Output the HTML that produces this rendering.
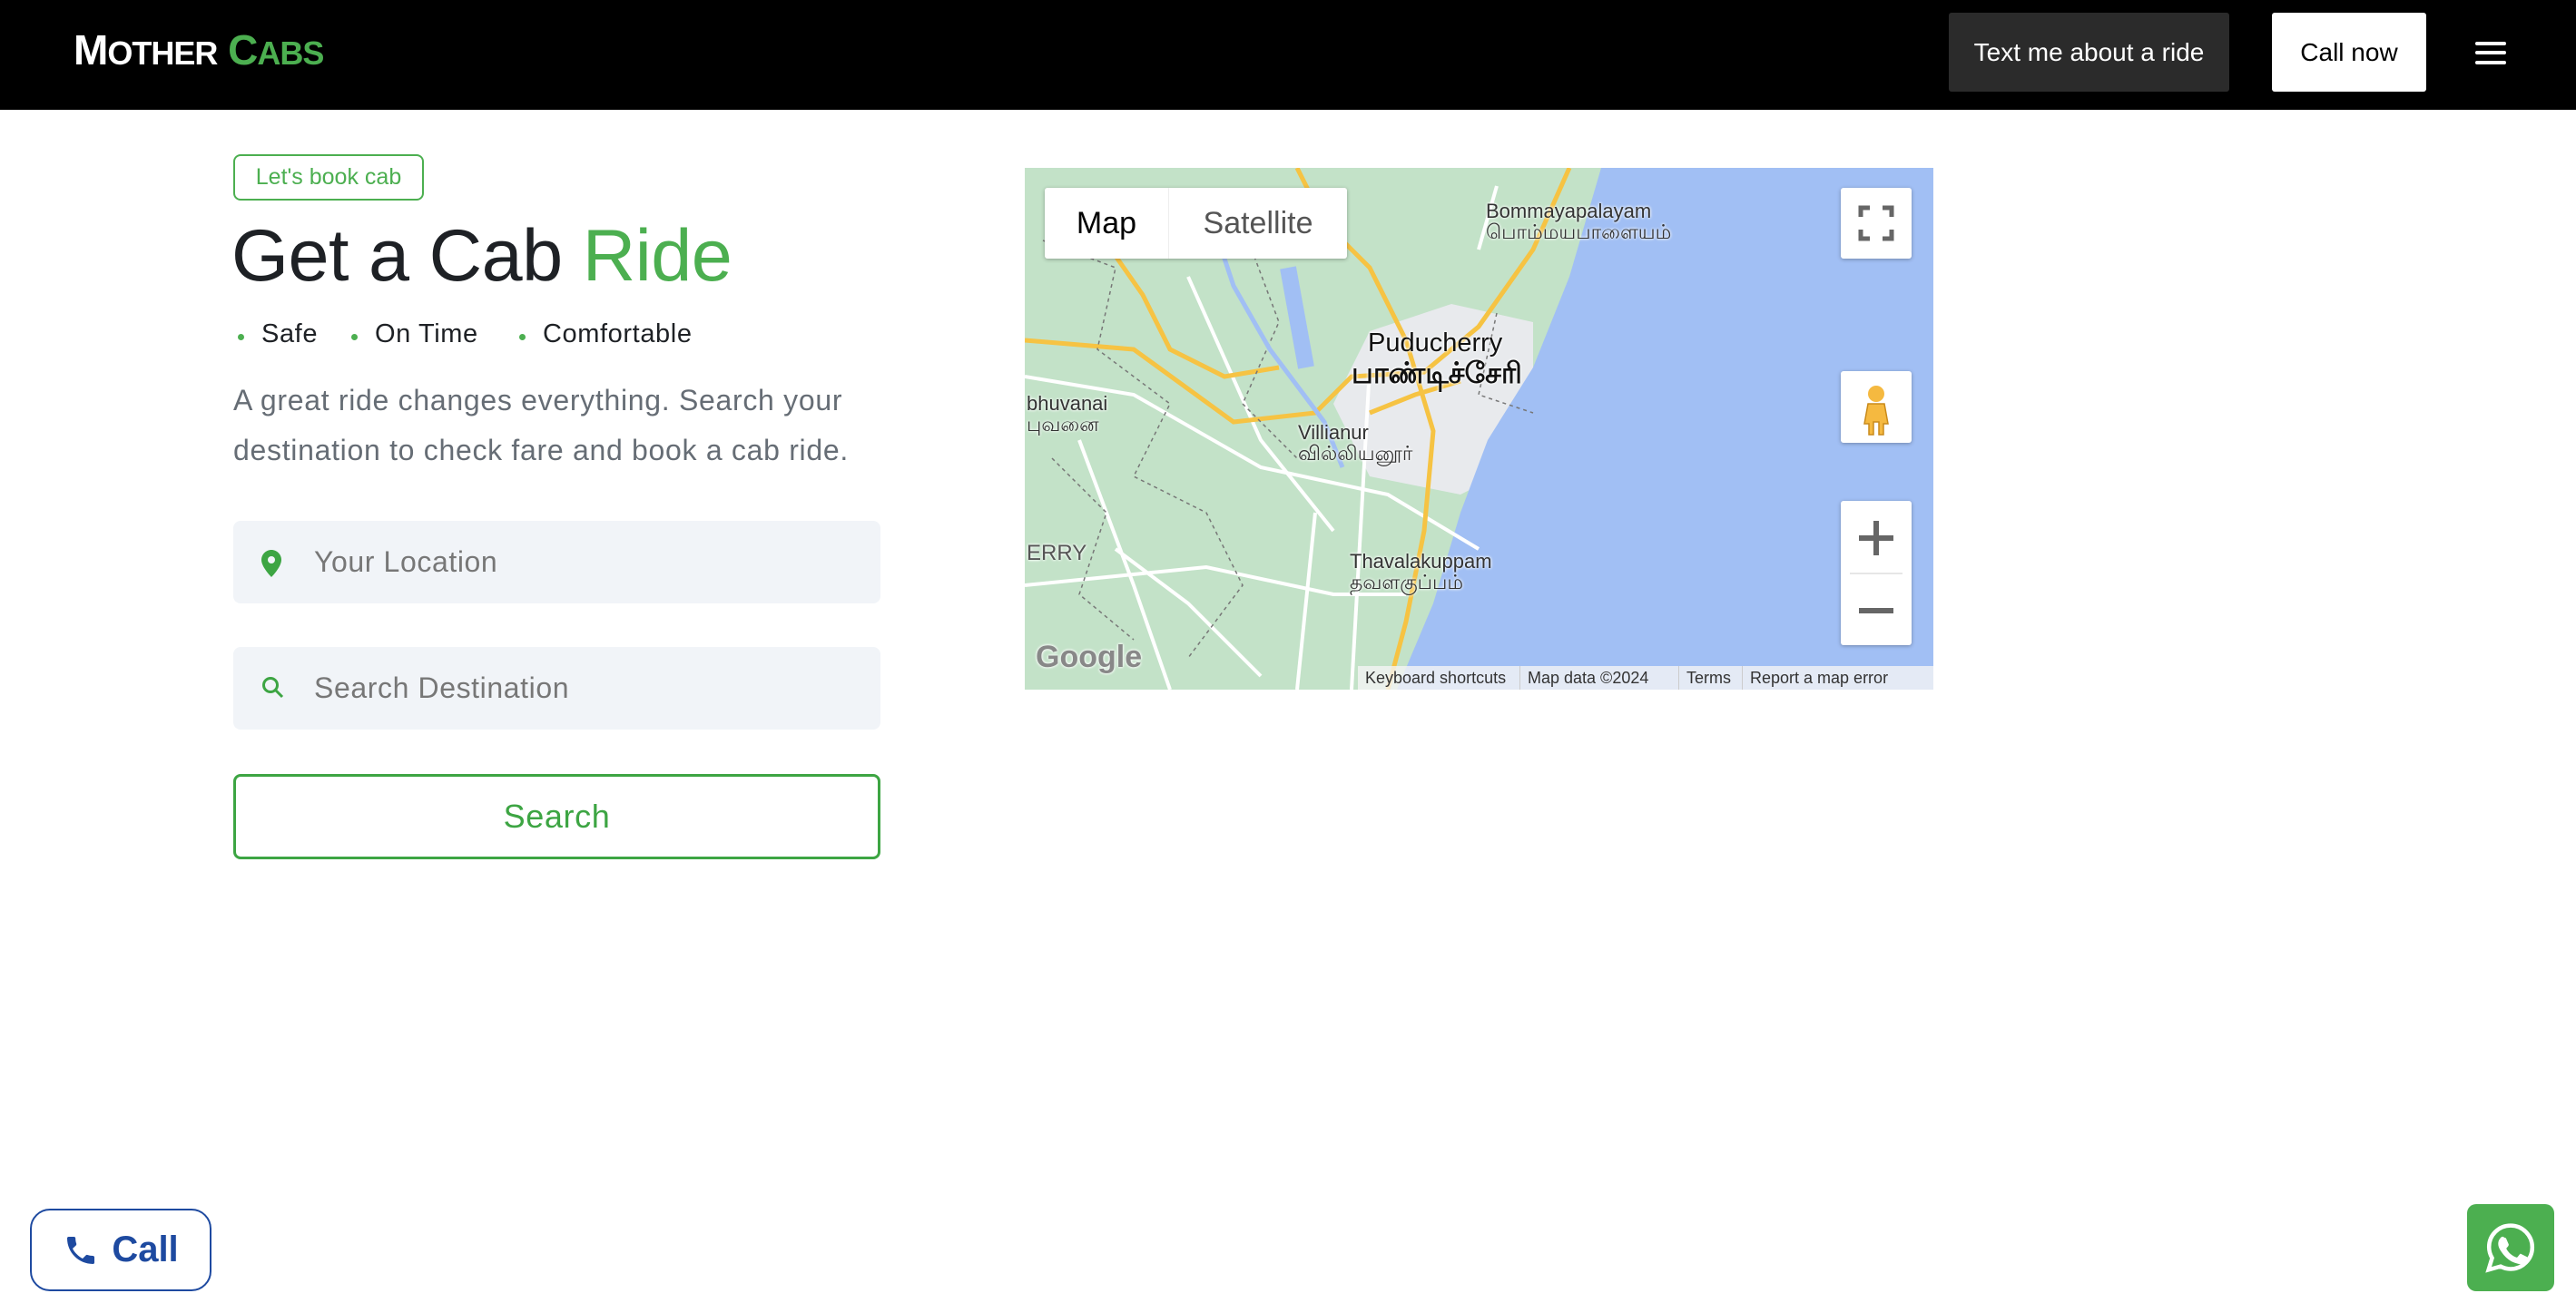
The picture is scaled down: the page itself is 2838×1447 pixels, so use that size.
<!DOCTYPE html>
<html><head><meta charset="utf-8"><style>
*{margin:0;padding:0;box-sizing:border-box}
body{width:2838px;height:1447px;background:#fff;font-family:"Liberation Sans",sans-serif;position:relative;overflow:hidden}
.hdr{position:absolute;left:0;top:0;width:2838px;height:121px;background:#000}
.logo{position:absolute;left:81px;top:28px;font-size:46px;font-weight:bold;color:#fff;letter-spacing:-1px}
.logo small{font-size:36px}
.logo .g{color:#4caf50}
.btn1{position:absolute;left:2147px;top:14px;width:309px;height:87px;background:#2b2b2b;color:#fff;font-size:28px;display:flex;align-items:center;justify-content:center;border-radius:3px}
.btn2{position:absolute;left:2503px;top:14px;width:170px;height:87px;background:#fff;color:#000;font-size:28px;display:flex;align-items:center;justify-content:center;border-radius:3px}
.ham{position:absolute;left:2727px;width:34px;height:4px;background:#fff;border-radius:2px}
.badge{position:absolute;left:257px;top:170px;width:210px;height:51px;border:2px solid #4caf50;border-radius:8px;color:#4caf50;font-size:25px;display:flex;align-items:center;justify-content:center}
h1{position:absolute;left:255px;top:236px;font-size:81px;color:#1e2125;letter-spacing:-0.5px;font-weight:normal}
h1 span{color:#4caf50}
.bul{position:absolute;top:352px;font-size:29px;color:#1e2125;letter-spacing:0.6px}
.bul:before{content:"";position:absolute;left:-26px;top:16px;width:7px;height:7px;border-radius:50%;background:#4caf50}
.p{position:absolute;left:257px;top:414px;width:800px;font-size:32px;letter-spacing:0.7px;line-height:55px;color:#666d75}
.inp{position:absolute;left:257px;width:713px;height:91px;background:#f1f4f8;border-radius:8px;font-size:32px;letter-spacing:0.6px;color:#777;display:flex;align-items:center;padding-left:89px}
.inp svg{position:absolute;left:31px;top:32px}
.sbtn{position:absolute;left:257px;top:853px;width:713px;height:94px;border:3px solid #3da543;border-radius:8px;color:#3da543;font-size:36px;letter-spacing:0.6px;display:flex;align-items:center;justify-content:center}
.map{position:absolute;left:1129px;top:185px;width:1001px;height:575px;background:#c3e2c8;overflow:hidden}
.ctl{position:absolute;background:#fff;box-shadow:0 1px 4px rgba(0,0,0,.3);border-radius:3px}
.lbl{position:absolute;font-size:24px;color:#333;text-shadow:0 0 3px #fff,0 0 3px #fff;font-family:"Liberation Sans","Noto Sans CJK SC",sans-serif;line-height:1.05}
.foot{position:absolute;top:549px;height:26px;background:rgba(245,245,245,.8);font-size:18px;color:#333;line-height:26px;padding:0 8px;white-space:nowrap}
.call{position:absolute;left:33px;top:1332px;width:200px;height:91px;border:2px solid #1e4aa0;border-radius:22px;color:#1e4aa0;font-size:40px;font-weight:bold;display:flex;align-items:center;justify-content:center;gap:14px}
.wa{position:absolute;left:2718px;top:1327px;width:96px;height:96px;background:#4caf50;border-radius:10px;display:flex;align-items:center;justify-content:center}
</style></head><body>
<div class="hdr">
 <div class="logo">M<small>OTHER</small> <span class="g">C<small>ABS</small></span></div>
 <div class="btn1">Text me about a ride</div>
 <div class="btn2">Call now</div>
 <div class="ham" style="top:46px"></div><div class="ham" style="top:56px"></div><div class="ham" style="top:67px"></div>
</div>
<div class="badge">Let's book cab</div>
<h1>Get a Cab <span>Ride</span></h1>
<div class="bul" style="left:288px">Safe</div>
<div class="bul" style="left:413px">On Time</div>
<div class="bul" style="left:598px">Comfortable</div>
<div class="p">A great ride changes everything. Search your<br>destination to check fare and book a cab ride.</div>
<div class="inp" style="top:574px"><svg width="22" height="30" viewBox="0 0 22 30"><path d="M11 0C5 0 0 5 0 11c0 8 11 19 11 19s11-11 11-19C22 5 17 0 11 0z" fill="#3da543"/><circle cx="11" cy="11" r="4" fill="#f1f4f8"/></svg>Your Location</div>
<div class="inp" style="top:713px"><svg width="26" height="26" viewBox="0 0 26 26"><circle cx="10" cy="10" r="7.5" fill="none" stroke="#3da543" stroke-width="3"/><path d="M16 16l7 7" stroke="#3da543" stroke-width="3"/></svg>Search Destination</div>
<div class="sbtn">Search</div>

<div class="map">
 <svg width="1001" height="575" style="position:absolute;left:0;top:0">
  <path d="M380 180 L470 150 L560 170 L560 320 L480 360 L380 340 L340 260Z" fill="#e8eaed"/>
  <path d="M635 0 L1001 0 L1001 575 L410 575 L450 480 L480 380 L510 300 L560 220 L600 120Z" fill="#a1bff4"/>
  <g stroke="#fff" stroke-width="4" fill="none">
   <path d="M0 230 L120 250 L260 330 L400 360 L500 420"/>
   <path d="M60 300 L120 460 L160 575"/>
   <path d="M0 460 L200 440 L340 470 L420 470"/>
   <path d="M320 380 L300 575"/>
   <path d="M180 120 L260 300 L340 400"/>
   <path d="M380 220 L360 575"/>
   <path d="M500 90 L520 20"/>
   <path d="M100 420 L180 480 L260 560"/>
  </g>
  <g stroke="#f6c343" stroke-width="5" fill="none">
   <path d="M300 0 L330 60 L380 110 L420 190 L450 290 L440 400 L420 500 L400 575"/>
   <path d="M0 190 L120 200 L230 280 L320 270 L360 230 L440 225 L500 175 L560 90 L600 0"/>
   <path d="M60 40 L130 140 L160 200 L220 230 L280 220"/>
   <path d="M480 235 L430 250 L380 270"/>
  </g>
  <g stroke="#777" stroke-width="1.5" stroke-dasharray="4 4" fill="none">
   <path d="M20 80 L100 110 L80 200 L160 260 L120 340 L200 380 L240 460 L180 540"/>
   <path d="M250 90 L280 170 L240 260 L300 320"/>
   <path d="M520 160 L500 250 L560 270"/>
   <path d="M30 320 L90 380 L60 470 L120 520"/>
  </g>
  <path d="M200 40 L230 130 L270 200 L330 280 L350 330" stroke="#a1bff4" stroke-width="5" fill="none"/>
  <path d="M290 110 L310 220" stroke="#a1bff4" stroke-width="18" fill="none"/>
 </svg>
 <div class="lbl" style="left:508px;top:36px;font-size:22px">Bommayapalayam<br>பொம்மயபாளையம்</div>
 <div class="lbl" style="left:378px;top:178px;font-size:29px;color:#111">Puducherry</div>
 <div class="lbl" style="left:360px;top:210px;font-size:32px;color:#111;font-weight:bold">பாண்டிச்சேரி</div>
 <div class="lbl" style="left:2px;top:248px;font-size:22px">bhuvanai<br>புவனை</div>
 <div class="lbl" style="left:301px;top:280px;font-size:22px">Villianur<br>வில்லியனூர்</div>
 <div class="lbl" style="left:358px;top:422px;font-size:22px">Thavalakuppam<br>தவளகுப்பம்</div>
 <div class="lbl" style="left:2px;top:412px;font-size:24px;color:#555">ERRY</div>
 <div class="lbl" style="left:12px;top:522px;font-size:34px;color:#888;font-weight:bold">Google</div>
 <div class="ctl" style="left:22px;top:22px;width:333px;height:78px;display:flex;font-size:34px">
  <div style="width:137px;display:flex;align-items:center;justify-content:center;color:#000;font-weight:500;border-right:1px solid #eee">Map</div>
  <div style="flex:1;display:flex;align-items:center;justify-content:center;color:#555">Satellite</div>
 </div>
 <div class="ctl" style="left:899px;top:22px;width:78px;height:78px"><svg width="78" height="78"><path d="M22 32V22h10M46 22h10v10M56 46v10H46M32 56H22V46" stroke="#666" stroke-width="5" fill="none"/></svg></div>
 <div class="ctl" style="left:899px;top:224px;width:78px;height:79px"><svg width="78" height="79"><circle cx="39" cy="25" r="9" fill="#f5b940"/><path d="M30 36h18l4 22h-5v12h-5V56h-6v14h-5V58h-5z" fill="#f5b940" stroke="#c98a1a" stroke-width="1.5"/></svg></div>
 <div class="ctl" style="left:899px;top:367px;width:78px;height:159px"><svg width="78" height="159"><path d="M39 22v38M20 41h38" stroke="#666" stroke-width="6"/><path d="M10 80h58" stroke="#e6e6e6" stroke-width="2"/><path d="M20 121h38" stroke="#666" stroke-width="6"/></svg></div>
 <div class="foot" style="left:367px;width:178px">Keyboard shortcuts</div>
 <div class="foot" style="left:545px;width:175px;border-left:1px solid #ccc">Map data ©2024</div>
 <div class="foot" style="left:720px;width:70px;border-left:1px solid #ccc">Terms</div>
 <div class="foot" style="left:790px;border-left:1px solid #ccc;width:211px">Report a map error</div>
</div>

<div class="call"><svg width="40" height="40" viewBox="0 0 24 24"><path d="M6.6 10.8c1.4 2.8 3.8 5.1 6.6 6.6l2.2-2.2c.3-.3.7-.4 1-.2 1.1.4 2.3.6 3.6.6.6 0 1 .4 1 1V20c0 .6-.4 1-1 1C10.6 21 3 13.4 3 4c0-.6.4-1 1-1h3.5c.6 0 1 .4 1 1 0 1.3.2 2.5.6 3.6.1.3 0 .7-.2 1z" fill="#1e4aa0"/></svg>Call</div>
<div class="wa"><svg width="60" height="60" viewBox="0 0 32 32"><path d="M16 3C9 3 3.3 8.6 3.3 15.6c0 2.4.7 4.6 1.8 6.5L3 29l7.1-2c1.8 1 3.8 1.5 5.9 1.5 7 0 12.7-5.7 12.7-12.7S23 3 16 3z" fill="none" stroke="#fff" stroke-width="2.4"/><path d="M11.5 9.5c-.4 0-1 .1-1.4.7-.5.6-1.4 1.5-1.4 3.6s1.5 4.1 1.7 4.4c.2.3 3 4.7 7.3 6.4 3.6 1.4 4.3 1.1 5.1 1 .8-.1 2.5-1 2.8-2 .3-1 .3-1.8.2-2-.1-.2-.4-.3-.8-.5l-2.8-1.4c-.4-.1-.7-.2-.9.2-.3.4-1.1 1.4-1.3 1.6-.2.3-.5.3-.9.1-.4-.2-1.7-.6-3.3-2-1.2-1.1-2-2.4-2.2-2.8-.2-.4 0-.6.2-.8l.6-.7c.2-.2.3-.4.4-.7.1-.3.1-.5 0-.7l-1.3-3c-.3-.8-.7-.7-.9-.7z" fill="#fff"/></svg></div>
</body></html>
